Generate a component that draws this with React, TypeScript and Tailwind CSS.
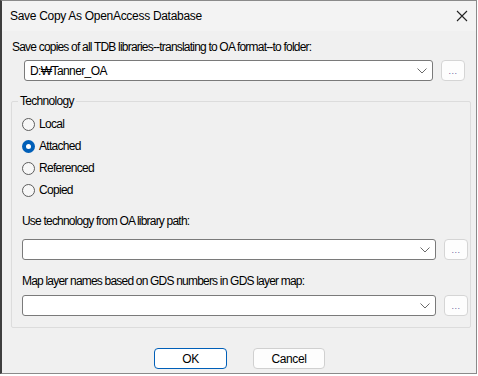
import React, { useState } from "react";

const FONT = "font-['Liberation_Sans',Arial,sans-serif]";

function Chevron() {
  return (
    <svg width="10" height="6" viewBox="0 0 10 6" className="shrink-0">
      <path d="M0.5 0.5 L5 5 L9.5 0.5" fill="none" stroke="#6a6a6a" strokeWidth="1" />
    </svg>
  );
}

function PathRow({ value, className = "" }: { value?: string; className?: string }) {
  return (
    <div className={`flex items-center gap-[8px] ${className}`}>
      <div className="h-[21px] flex-1 flex items-center justify-between bg-white border border-[#7a7a7a] rounded-[3px] pl-[5px] pr-[5px]">
        <span className="text-[12px] leading-[14px] text-black tracking-[-0.6px]">{value}</span>
        <Chevron />
      </div>
      <button className="h-[21px] w-[24px] shrink-0 bg-[#fdfdfd] border border-[#d5d5d5] rounded-[4px] flex items-end justify-center pb-[4px]">
        <span className="text-[9px] leading-[9px] text-[#6a5fa0] tracking-[0.5px]">...</span>
      </button>
    </div>
  );
}

function Radio({ label, checked, onSelect }: { label: string; checked: boolean; onSelect: () => void }) {
  return (
    <div className="h-[22px] flex items-center cursor-pointer" onClick={onSelect}>
      {checked ? (
        <span className="w-[13px] h-[13px] rounded-full bg-[#005fb8] flex items-center justify-center shrink-0">
          <span className="w-[5px] h-[5px] rounded-full bg-white" />
        </span>
      ) : (
        <span className="w-[13px] h-[13px] rounded-full border border-[#5d5d5d] bg-[#f7f7f7] shrink-0" />
      )}
      <span className="ml-[4px] text-[12px] leading-[14px] tracking-[-0.7px] text-black">{label}</span>
    </div>
  );
}

export default function App() {
  const [tech, setTech] = useState("Attached");
  const options = ["Local", "Attached", "Referenced", "Copied"];

  return (
    <div className={`${FONT} w-[477px] h-[374px] bg-[#f0f0f0] border border-[#8a8a8a] border-l-[#3e3e3e] border-l-2 flex flex-col text-black`}>
      {/* Title bar */}
      <div className="h-[30px] bg-[#f3f3f3] flex items-center justify-between pl-[8px] pr-[8px]">
        <span className="text-[12px] leading-[14px] tracking-[-0.3px]">Save Copy As OpenAccess Database</span>
        <svg width="12" height="12" viewBox="0 0 12 12">
          <path d="M1 1 L11 11 M11 1 L1 11" stroke="#222" strokeWidth="1.1" />
        </svg>
      </div>

      <div className="flex flex-col pl-[9px] pr-[4px]">
        <div className="mt-[9px] h-[14px] text-[12px] leading-[14px] tracking-[-0.8px] pl-[1px]">
          Save copies of all TDB libraries--translating to OA format--to folder:
        </div>
        <PathRow value="D:₩Tanner_OA" className="mt-[6px] pl-[13px] pr-[7px]" />

        <fieldset className="mt-[13px] border border-[#dcdcdc] rounded-[2px] pl-[10px] pr-[2px] pb-[10px] m-0 mr-[1px] h-[234px]">
          <legend className="text-[12px] leading-[14px] tracking-[-0.7px] ml-[-4px] px-[2px]">Technology</legend>
          <div className="pt-[5px] flex flex-col">
            {options.map((o) => (
              <Radio key={o} label={o} checked={tech === o} onSelect={() => setTech(o)} />
            ))}
          </div>
          <div className="mt-[13px] h-[14px] text-[12px] leading-[14px] tracking-[-0.8px]">
            Use technology from OA library path:
          </div>
          <PathRow className="mt-[11px]" />
          <div className="mt-[14px] h-[14px] text-[12px] leading-[14px] tracking-[-0.8px]">
            Map layer names based on GDS numbers in GDS layer map:
          </div>
          <PathRow className="mt-[7px]" />
        </fieldset>

        <div className="mt-[20px] flex justify-center gap-[26px] pr-[4px]">
          <button className="w-[73px] h-[21px] bg-white border border-[#005fb8] rounded-[4px] text-[12px] leading-[14px] tracking-[-0.4px]">
            OK
          </button>
          <button className="w-[72px] h-[21px] bg-[#fdfdfd] border border-[#d0d0d0] rounded-[4px] text-[12px] leading-[14px] tracking-[-0.4px]">
            Cancel
          </button>
        </div>
      </div>
    </div>
  );
}
